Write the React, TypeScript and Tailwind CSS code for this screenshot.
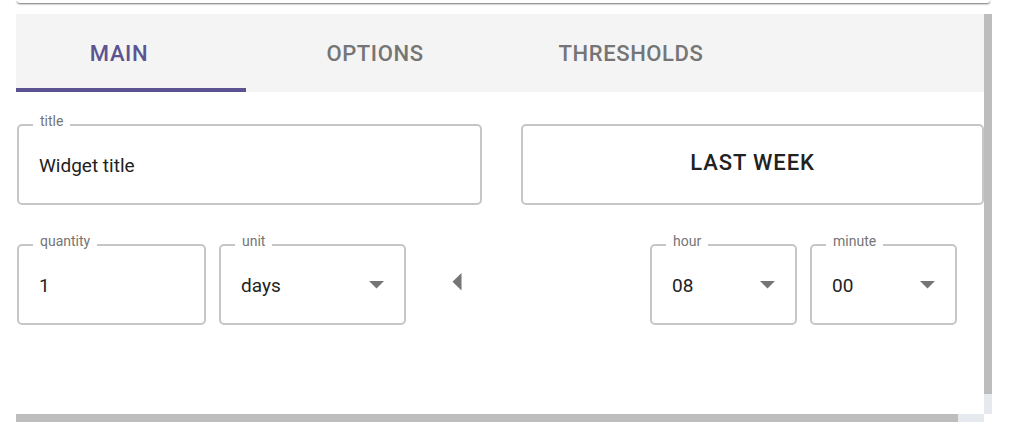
import React from 'react';

const DropArrow: React.FC = () => (
  <svg width="15" height="8" viewBox="0 0 15 8" className="shrink-0">
    <polygon points="0,0 15,0 7.5,7.5" fill="#757575" />
  </svg>
);

type FieldProps = {
  label: string;
  value: string;
  select?: boolean;
  className?: string;
};

const OutlinedField: React.FC<FieldProps> = ({ label, value, select, className }) => (
  <div
    className={`relative h-[81px] rounded-[5px] border-2 border-[#c6c6c6] flex items-center pl-[20px] pr-[20px] ${className ?? ''}`}
  >
    <span className="absolute left-[14px] top-[-14px] bg-white px-[7px] text-[14px] leading-[18px] text-[#757575]">
      {label}
    </span>
    <span className="flex-1 pt-[3px] text-[19px] text-[#222]">{value}</span>
    {select && <DropArrow />}
  </div>
);

const tabs = [
  { name: 'MAIN', width: 'w-[206px]', active: true },
  { name: 'OPTIONS', width: 'w-[256px] ml-[25px]', active: false },
  { name: 'THRESHOLDS', width: 'w-[256px]', active: false },
];

const App: React.FC = () => {
  return (
    <div className="w-[1012px] h-[440px] bg-white overflow-hidden font-['Roboto',sans-serif]">
      {/* bottom edge of the card above */}
      <div className="ml-[17px] w-[973px] h-[3px] bg-white rounded-b-[5px] shadow-[0_1px_2px_rgba(0,0,0,0.55)]" />

      <div className="mt-[11px] ml-[16px] w-[976px] h-[408px] grid grid-cols-[968px_8px] grid-rows-[400px_8px]">
        <div className="overflow-hidden">
          {/* tab bar */}
          <div className="relative h-[78px] bg-[#f4f4f4] flex items-center">
            {tabs.map((t) => (
              <div
                key={t.name}
                className={`${t.width} text-center text-[22px] font-medium tracking-[0.6px] ${
                  t.active ? 'text-[#5c5492]' : 'text-[#757575]'
                }`}
              >
                {t.name}
              </div>
            ))}
            <div className="absolute left-0 bottom-0 w-[230px] h-[4px] bg-[#5b5391]" />
          </div>

          {/* first row */}
          <div className="mt-[32px] flex items-start">
            <OutlinedField label="title" value="Widget title" className="ml-[1px] w-[465px]" />
            <button className="ml-[39px] w-[463px] h-[81px] rounded-[5px] border-2 border-[#c6c6c6] bg-white flex items-center justify-center pb-[4px] text-[22px] font-medium tracking-[0.9px] text-[#222]">
              LAST WEEK
            </button>
          </div>

          {/* second row */}
          <div className="mt-[39px] flex items-center">
            <OutlinedField label="quantity" value="1" className="ml-[1px] w-[189px]" />
            <OutlinedField label="unit" value="days" select className="ml-[13px] w-[187px]" />
            <svg width="10" height="18" viewBox="0 0 10 18" className="ml-[46px] mb-[6px]">
              <polygon points="9.5,0 9.5,17.5 0.5,8.75" fill="#757575" />
            </svg>
            <OutlinedField label="hour" value="08" select className="ml-[188px] w-[147px]" />
            <OutlinedField label="minute" value="00" select className="ml-[13px] w-[147px]" />
          </div>
        </div>

        {/* vertical scrollbar */}
        <div className="flex flex-col">
          <div className="h-[380px] bg-[#bdbdbd]" />
          <div className="flex-1 bg-[#e6e9ee]" />
        </div>

        {/* horizontal scrollbar */}
        <div className="flex">
          <div className="w-[942px] bg-[#bdbdbd]" />
          <div className="flex-1 bg-[#e6e9ee]" />
        </div>
        <div className="bg-white" />
      </div>
    </div>
  );
};

export default App;
